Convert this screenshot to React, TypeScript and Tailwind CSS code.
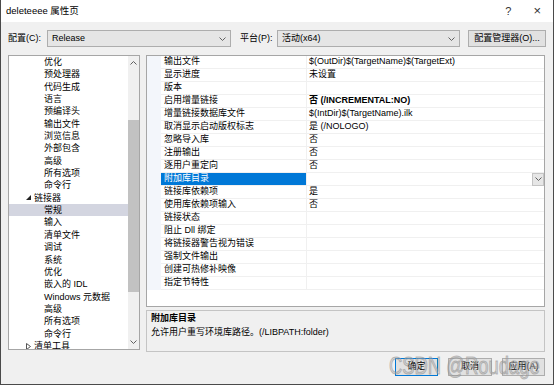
import React from 'react';

type TreeItem = { label: string; level: 1 | 2; expanded?: boolean; collapsed?: boolean; selected?: boolean };

const treeItems: TreeItem[] = [
  { label: '优化', level: 2 },
  { label: '预处理器', level: 2 },
  { label: '代码生成', level: 2 },
  { label: '语言', level: 2 },
  { label: '预编译头', level: 2 },
  { label: '输出文件', level: 2 },
  { label: '浏览信息', level: 2 },
  { label: '外部包含', level: 2 },
  { label: '高级', level: 2 },
  { label: '所有选项', level: 2 },
  { label: '命令行', level: 2 },
  { label: '链接器', level: 1, expanded: true },
  { label: '常规', level: 2, selected: true },
  { label: '输入', level: 2 },
  { label: '清单文件', level: 2 },
  { label: '调试', level: 2 },
  { label: '系统', level: 2 },
  { label: '优化', level: 2 },
  { label: '嵌入的 IDL', level: 2 },
  { label: 'Windows 元数据', level: 2 },
  { label: '高级', level: 2 },
  { label: '所有选项', level: 2 },
  { label: '命令行', level: 2 },
  { label: '清单工具', level: 1, collapsed: true },
];

type Prop = { name: string; value?: string; bold?: boolean; selected?: boolean };

const props: Prop[] = [
  { name: '输出文件', value: '$(OutDir)$(TargetName)$(TargetExt)' },
  { name: '显示进度', value: '未设置' },
  { name: '版本' },
  { name: '启用增量链接', value: '否 (/INCREMENTAL:NO)', bold: true },
  { name: '增量链接数据库文件', value: '$(IntDir)$(TargetName).ilk' },
  { name: '取消显示启动版权标志', value: '是 (/NOLOGO)' },
  { name: '忽略导入库', value: '否' },
  { name: '注册输出', value: '否' },
  { name: '逐用户重定向', value: '否' },
  { name: '附加库目录', selected: true },
  { name: '链接库依赖项', value: '是' },
  { name: '使用库依赖项输入', value: '否' },
  { name: '链接状态' },
  { name: '阻止 Dll 绑定' },
  { name: '将链接器警告视为错误' },
  { name: '强制文件输出' },
  { name: '创建可热修补映像' },
  { name: '指定节特性' },
];

function Chevron({ up = false }: { up?: boolean }) {
  return (
    <svg width="7" height="4" viewBox="0 0 7 4" className="shrink-0">
      <polyline
        points={up ? '0.5,3.5 3.5,0.5 6.5,3.5' : '0.5,0.5 3.5,3.5 6.5,0.5'}
        fill="none"
        stroke="#606060"
        strokeWidth="1"
      />
    </svg>
  );
}

function Select({ value, width }: { value: string; width: string }) {
  return (
    <div className={`${width} flex h-[17px] items-center justify-between border border-[#adadad] bg-[#e5e5e5] pl-[4px] pr-[4px]`}>
      <span>{value}</span>
      <Chevron />
    </div>
  );
}

export default function App() {
  return (
    <div className="relative flex h-[385px] w-[554px] flex-col overflow-hidden border-x border-b border-[#4a4a4a] bg-[#f0f0f0] font-['Liberation_Sans','Noto_Sans_CJK_SC',sans-serif] text-[9px] text-black">
      <header className="flex h-[22px] shrink-0 items-center justify-between bg-white pl-[5px] pr-[12px] text-[9.5px]">
        <span>deleteeee 属性页</span>
        <div className="flex items-center gap-[22px] text-[11px] text-[#333]">
          <span>?</span>
          <span className="text-[13px]">×</span>
        </div>
      </header>

      <div className="mt-[8px] flex h-[17px] items-center pl-[7px]">
        <span className="w-[39px]">配置(C):</span>
        <Select value="Release" width="w-[184px]" />
        <span className="ml-[9px] w-[37px]">平台(P):</span>
        <Select value="活动(x64)" width="w-[183px]" />
        <button
          type="button"
          className="ml-[8px] h-[17px] w-[78px] border border-[#adadad] bg-[#e1e1e1] text-[9px]"
        >
          配置管理器(O)...
        </button>
      </div>

      <div className="mt-[8px] flex items-start pl-[7px]">
        <div className="flex h-[295px] w-[132px] border border-[#a6a6a6] bg-white">
          <ul className="flex-1 overflow-hidden">
            {treeItems.map((item, i) => (
              <li
                key={i}
                className={`flex h-[12.35px] items-center whitespace-nowrap leading-[12.35px] ${
                  item.selected ? 'bg-[#d3d5e0]' : ''
                } ${item.level === 2 ? 'pl-[35px]' : 'pl-[17px]'}`}
              >
                {item.level === 1 && (
                  <span className="mr-[3px] flex w-[5px] justify-center">
                    {item.expanded ? (
                      <svg width="5" height="5" viewBox="0 0 5 5">
                        <polygon points="5,0 5,5 0,5" fill="#222" />
                      </svg>
                    ) : (
                      <svg width="5" height="7" viewBox="0 0 5 7">
                        <polygon points="0.5,0.5 4.5,3.5 0.5,6.5" fill="none" stroke="#555" strokeWidth="1" />
                      </svg>
                    )}
                  </span>
                )}
                {item.label}
              </li>
            ))}
          </ul>
          <div className="flex w-[11px] flex-col bg-[#f0f0f0]">
            <div className="flex h-[14px] items-center justify-center">
              <Chevron up />
            </div>
            <div className="h-[50px]" />
            <div className="h-[172px] bg-[#c2c2c2]" />
            <div className="flex-1" />
            <div className="flex h-[14px] items-center justify-center">
              <Chevron />
            </div>
          </div>
        </div>

        <div className="ml-[6px] flex w-[399px] flex-col">
          <div className="h-[252px] border border-[#a6a6a6] bg-white">
            {props.map((p) => (
              <div key={p.name} className="flex h-[13px]">
                <div className="w-[14px] bg-[#f3f6fb]" />
                <div
                  className={`flex w-[145px] items-center whitespace-nowrap border-b border-[#f0f0f0] pl-[3px] ${
                    p.selected ? 'bg-[#0078d7] text-white' : ''
                  }`}
                >
                  {p.name}
                </div>
                <div className="flex flex-1 items-center justify-between border-b border-l border-[#f0f0f0] pl-[2px]">
                  <span className={`whitespace-nowrap ${p.bold ? 'font-bold' : ''}`}>{p.value}</span>
                  {p.selected && (
                    <div className="flex h-[13px] w-[12px] items-center justify-center border border-[#c4c4c4] bg-[#e6e6e6]">
                      <Chevron />
                    </div>
                  )}
                </div>
              </div>
            ))}
          </div>

          <div className="mt-[3px] h-[42px] border border-[#c4c4c4] bg-[#f0f0f0] pl-[4px] pt-[1px]">
            <div className="h-[13px] font-bold leading-[13px]">附加库目录</div>
            <div className="mt-[1px] leading-[13px]">允许用户重写环境库路径。(/LIBPATH:folder)</div>
          </div>
        </div>
      </div>

      <div className="mt-[6px] flex justify-end gap-[10px] pr-[8px]">
        <button type="button" className="h-[18px] w-[43px] border border-[#0078d7] bg-[#e1e1e1] text-[9px]">
          确定
        </button>
        <button type="button" className="h-[18px] w-[44px] border border-[#adadad] bg-[#e1e1e1] text-[9px]">
          取消
        </button>
        <button type="button" className="h-[18px] w-[43px] border border-[#adadad] bg-[#e1e1e1] text-[9px]">
          应用(A)
        </button>
      </div>

      <div className="pointer-events-none absolute left-[388px] top-[349px] origin-left scale-x-[0.8] whitespace-nowrap font-['Liberation_Sans',sans-serif] text-[23px] text-[#b4b4b4]/40 [-webkit-text-stroke:1px_rgba(140,140,140,0.55)]">
        CSDN @Roudage
      </div>
    </div>
  );
}
